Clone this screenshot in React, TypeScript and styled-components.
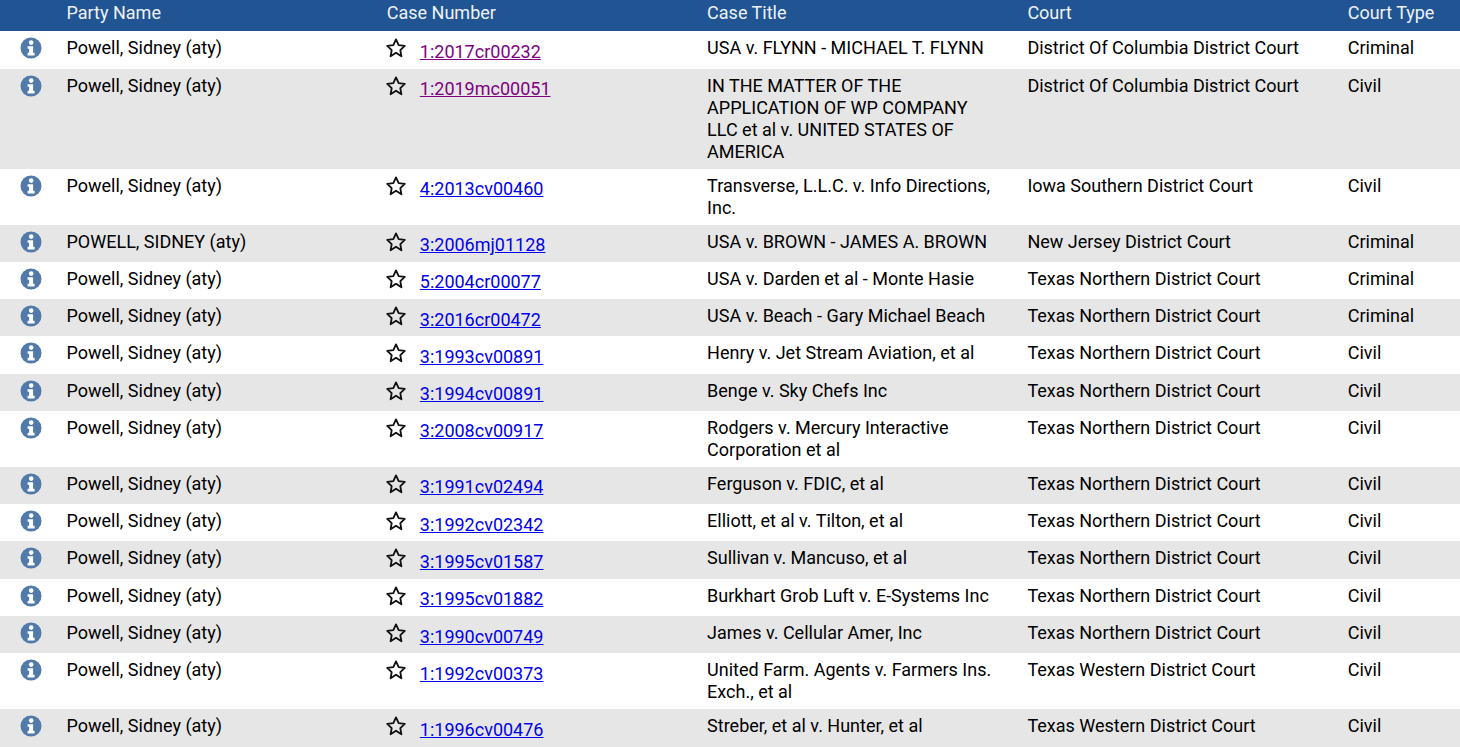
import React from 'react';
import styled, { createGlobalStyle } from 'styled-components';

const GlobalStyle = createGlobalStyle`
  html, body {
    margin: 0;
    padding: 0;
    background: #fff;
    overflow: hidden;
  }
  body {
    font-family: Roboto, "Liberation Sans", sans-serif;
    font-size: 18px;
    line-height: 22px;
    color: #000;
  }
`;

const Table = styled.table`
  width: 1460px;
  table-layout: fixed;
  border-collapse: collapse;
`;

const HeadRow = styled.tr`
  background: #205493;
  height: 31.36px;
`;

const HeadCell = styled.th<{ $width?: number }>`
  box-sizing: border-box;
  width: ${({ $width }) => ($width ? `${$width}px` : 'auto')};
  padding: 0 0 5px 10.5px;
  font-weight: 400;
  text-align: left;
  color: #eef2f7;
  white-space: nowrap;
`;

const Row = styled.tr`
  &:nth-child(even) {
    background: #e6e6e6;
  }
`;

const Cell = styled.td`
  box-sizing: border-box;
  padding: 6px 20px 6px 10.5px;
  vertical-align: top;
  color: #000;
`;

const IconCell = styled(Cell)`
  padding: 6px 0 0 19px;
`;

const InfoIcon = styled.svg`
  display: block;
  width: 24px;
  height: 24px;
  margin-top: -1px;
  color: #517aab;
`;

const CaseWrap = styled.div`
  display: flex;
  align-items: flex-start;
  gap: 13px;
  height: 25.28px;
`;

const Star = styled.svg`
  flex: none;
  display: block;
  width: 22px;
  height: 22px;
  margin-left: -2px;
`;

const CaseLink = styled.a<{ $visited?: boolean }>`
  margin-top: 3.5px;
  color: ${({ $visited }) => ($visited ? '#800080' : '#0000ee')};
  text-decoration: underline;
`;

const InfoGlyph = () => (
  <InfoIcon viewBox="0 0 24 24" aria-hidden="true">
    <circle cx="12" cy="12" r="10.5" fill="currentColor" />
    <circle cx="12.2" cy="6.6" r="2.3" fill="#fff" />
    <path d="M8.6 10.2h5.5v6.6h1.5v2.6H8.6v-2.6h1.5v-4H8.6z" fill="#fff" />
  </InfoIcon>
);

const StarGlyph = () => (
  <Star viewBox="0 0 24 24" aria-hidden="true">
    <path
      d="M12 2.6l2.9 6.2 6.7.9-4.9 4.7 1.2 6.7L12 17.2l-5.9 3.9 1.2-6.7-4.9-4.7 6.7-.9z"
      fill="none"
      stroke="#111"
      strokeWidth="2"
      strokeLinejoin="round"
    />
  </Star>
);

type CaseRow = {
  party: string;
  num: string;
  title: string;
  court: string;
  type: string;
  visited?: boolean;
};

const rows: CaseRow[] = [
  { party: 'Powell, Sidney (aty)', num: '1:2017cr00232', title: 'USA v. FLYNN - MICHAEL T. FLYNN', court: 'District Of Columbia District Court', type: 'Criminal', visited: true },
  { party: 'Powell, Sidney (aty)', num: '1:2019mc00051', title: 'IN THE MATTER OF THE APPLICATION OF WP COMPANY LLC et al v. UNITED STATES OF AMERICA', court: 'District Of Columbia District Court', type: 'Civil', visited: true },
  { party: 'Powell, Sidney (aty)', num: '4:2013cv00460', title: 'Transverse, L.L.C. v. Info Directions, Inc.', court: 'Iowa Southern District Court', type: 'Civil' },
  { party: 'POWELL, SIDNEY (aty)', num: '3:2006mj01128', title: 'USA v. BROWN - JAMES A. BROWN', court: 'New Jersey District Court', type: 'Criminal' },
  { party: 'Powell, Sidney (aty)', num: '5:2004cr00077', title: 'USA v. Darden et al - Monte Hasie', court: 'Texas Northern District Court', type: 'Criminal' },
  { party: 'Powell, Sidney (aty)', num: '3:2016cr00472', title: 'USA v. Beach - Gary Michael Beach', court: 'Texas Northern District Court', type: 'Criminal' },
  { party: 'Powell, Sidney (aty)', num: '3:1993cv00891', title: 'Henry v. Jet Stream Aviation, et al', court: 'Texas Northern District Court', type: 'Civil' },
  { party: 'Powell, Sidney (aty)', num: '3:1994cv00891', title: 'Benge v. Sky Chefs Inc', court: 'Texas Northern District Court', type: 'Civil' },
  { party: 'Powell, Sidney (aty)', num: '3:2008cv00917', title: 'Rodgers v. Mercury Interactive Corporation et al', court: 'Texas Northern District Court', type: 'Civil' },
  { party: 'Powell, Sidney (aty)', num: '3:1991cv02494', title: 'Ferguson v. FDIC, et al', court: 'Texas Northern District Court', type: 'Civil' },
  { party: 'Powell, Sidney (aty)', num: '3:1992cv02342', title: 'Elliott, et al v. Tilton, et al', court: 'Texas Northern District Court', type: 'Civil' },
  { party: 'Powell, Sidney (aty)', num: '3:1995cv01587', title: 'Sullivan v. Mancuso, et al', court: 'Texas Northern District Court', type: 'Civil' },
  { party: 'Powell, Sidney (aty)', num: '3:1995cv01882', title: 'Burkhart Grob Luft v. E-Systems Inc', court: 'Texas Northern District Court', type: 'Civil' },
  { party: 'Powell, Sidney (aty)', num: '3:1990cv00749', title: 'James v. Cellular Amer, Inc', court: 'Texas Northern District Court', type: 'Civil' },
  { party: 'Powell, Sidney (aty)', num: '1:1992cv00373', title: 'United Farm. Agents v. Farmers Ins. Exch., et al', court: 'Texas Western District Court', type: 'Civil' },
  { party: 'Powell, Sidney (aty)', num: '1:1996cv00476', title: 'Streber, et al v. Hunter, et al', court: 'Texas Western District Court', type: 'Civil' },
];

export default function App() {
  return (
    <>
      <GlobalStyle />
      <Table>
        <thead>
          <HeadRow>
            <HeadCell $width={56} />
            <HeadCell $width={320.3}>Party Name</HeadCell>
            <HeadCell $width={320.3}>Case Number</HeadCell>
            <HeadCell $width={320.3}>Case Title</HeadCell>
            <HeadCell $width={320.3}>Court</HeadCell>
            <HeadCell>Court Type</HeadCell>
          </HeadRow>
        </thead>
        <tbody>
          {rows.map((r) => (
            <Row key={r.num}>
              <IconCell>
                <InfoGlyph />
              </IconCell>
              <Cell>{r.party}</Cell>
              <Cell>
                <CaseWrap>
                  <StarGlyph />
                  <CaseLink href="#" $visited={r.visited}>
                    {r.num}
                  </CaseLink>
                </CaseWrap>
              </Cell>
              <Cell>{r.title}</Cell>
              <Cell>{r.court}</Cell>
              <Cell>{r.type}</Cell>
            </Row>
          ))}
        </tbody>
      </Table>
    </>
  );
}
